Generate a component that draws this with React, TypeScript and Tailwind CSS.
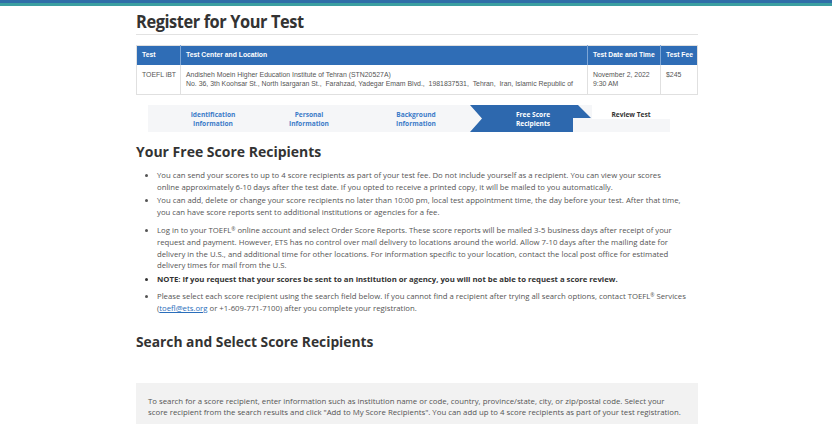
import React from "react";

const body = { fontFamily: '"Open Sans", "Liberation Sans", sans-serif' } as React.CSSProperties;
const arial = { fontFamily: '"Liberation Sans", Arial, sans-serif' } as React.CSSProperties;

function Step({ label1, label2, className }: { label1: string; label2?: string; className: string }) {
  return (
    <div className={`flex flex-col items-center justify-center text-[6.6px] font-bold leading-[9px] text-[#3d7cc9] ${className}`}>
      <span>{label1}</span>
      {label2 && <span>{label2}</span>}
    </div>
  );
}

export default function App() {
  return (
    <div className="w-[832px] h-[424px] overflow-hidden bg-white text-[#555]" style={body}>
      <div className="h-[3px] bg-[#2f6ea8]" />
      <div className="h-[3px] bg-[#3b9fa1]" />
      <div className="w-[562px] ml-[136px]">
        <div className="pt-[4px] h-[29px] border-b border-[#e2e2e2]">
          <h1 className="inline-block origin-left scale-x-[0.91] text-[18px] leading-[22px] font-bold text-[#333] tracking-tight">
            Register for Your Test
          </h1>
        </div>

        <table className="mt-[10px] w-full border-collapse border border-[#e0e0e0]" style={arial}>
          <thead>
            <tr className="bg-[#2f6db6] text-white text-[6.8px] font-bold h-[19px] text-left">
              <th className="w-[44px] pl-[5px] border-r border-[#7ea6d6]">Test</th>
              <th className="pl-[5px] border-r border-[#7ea6d6]">Test Center and Location</th>
              <th className="w-[73px] pl-[5px] border-r border-[#7ea6d6]">Test Date and Time</th>
              <th className="w-[37px] pl-[5px]">Test Fee</th>
            </tr>
          </thead>
          <tbody>
            <tr className="text-[6.9px] leading-[9.5px] text-[#555] h-[30px] align-top">
              <td className="pl-[5px] pt-[5px] border-r border-[#e0e0e0]">TOEFL iBT</td>
              <td className="pl-[5px] pt-[5px] border-r border-[#e0e0e0] whitespace-nowrap">
                <div>Andisheh Moein Higher Education Institute of Tehran (STN20527A)</div>
                <div>No. 36, 3th Koohsar St., North Isargaran St., &nbsp;Farahzad, Yadegar Emam Blvd., &nbsp;1981837531, &nbsp;Tehran, &nbsp;Iran, Islamic Republic of</div>
              </td>
              <td className="pl-[5px] pt-[5px] border-r border-[#e0e0e0]">
                <div>November 2, 2022</div>
                <div>9:30 AM</div>
              </td>
              <td className="pl-[5px] pt-[5px]">$245</td>
            </tr>
          </tbody>
        </table>

        <div className="mt-[10px] ml-[12px] w-[522px] h-[27px] flex bg-[#f5f6f8]">
          <Step className="w-[130px]" label1="Identification" label2="Information" />
          <Step className="w-[62px]" label1="Personal" label2="Information" />
          <Step className="w-[130px] pl-[22px]" label1="Background" label2="Information" />
          <div className="relative w-[122px] h-[27px]">
            <svg className="absolute inset-0" width="122" height="27" viewBox="0 0 122 27">
              <path d="M0 0 H108 L121 13 H103 V27 H0 L12 13.5 Z" fill="#2d68ae" />
            </svg>
            <div className="relative h-full flex flex-col items-center justify-center text-[6.6px] font-bold leading-[9px] text-white pl-[4px]">
              <span>Free Score</span>
              <span>Recipients</span>
            </div>
          </div>
          <div className="flex-1 flex flex-col">
            <div className="h-[14px] bg-white flex items-end justify-center text-[6.6px] font-bold leading-[9px] text-[#333]">
              Review Test
            </div>
            <div className="flex-1 bg-[#f5f6f8]" />
          </div>
        </div>

        <h2 className="mt-[10px] text-[14px] leading-[20px] font-bold text-[#333]">Your Free Score Recipients</h2>

        <ul className="mt-[8px] ml-[12px] mr-[6px] text-[7.75px] leading-[11.6px] text-[#555] list-disc pl-[9px]">
          <li className="mb-[2px]">
            You can send your scores to up to 4 score recipients as part of your test fee. Do not include yourself as a recipient. You can view your scores<br />online approximately 6-10 days after the test date. If you opted to receive a printed copy, it will be mailed to you automatically.
          </li>
          <li className="mb-[2px]">
            You can add, delete or change your score recipients no later than 10:00 pm, local test appointment time, the day before your test. After that time, you can have score reports sent to additional institutions or agencies for a fee.
          </li>
          <li className="mb-[2px] pt-[5px]">
            Log in to your TOEFL<sup className="text-[5px]">®</sup> online account and select Order Score Reports. These score reports will be mailed 3-5 business days after receipt of your request and payment. However, ETS has no control over mail delivery to locations around the world. Allow 7-10 days after the mailing date for delivery in the U.S., and additional time for other locations. For information specific to your location, contact the local post office for estimated delivery times for mail from the U.S.
          </li>
          <li className="mb-[1px] font-bold text-[#333]">
            NOTE: If you request that your scores be sent to an institution or agency, you will not be able to request a score review.
          </li>
          <li className="pt-[5px]">
            Please select each score recipient using the search field below. If you cannot find a recipient after trying all search options, contact TOEFL<sup className="text-[5px]">®</sup> Services (<span className="text-[#2a6ebb] underline">toefl@ets.org</span> or +1-609-771-7100) after you complete your registration.
          </li>
        </ul>

        <h2 className="mt-[17px] text-[13.8px] leading-[20px] font-bold text-[#333]">Search and Select Score Recipients</h2>

        <div className="mt-[31px] bg-[#f2f2f2] pt-[13px] pl-[12px] pr-[8px] pb-[12px] text-[7.8px] leading-[11.6px] text-[#555]">
          To search for a score recipient, enter information such as institution name or code, country, province/state, city, or zip/postal code. Select your<br />score recipient from the search results and click "Add to My Score Recipients". You can add up to 4 score recipients as part of your test registration.
        </div>
      </div>
    </div>
  );
}
